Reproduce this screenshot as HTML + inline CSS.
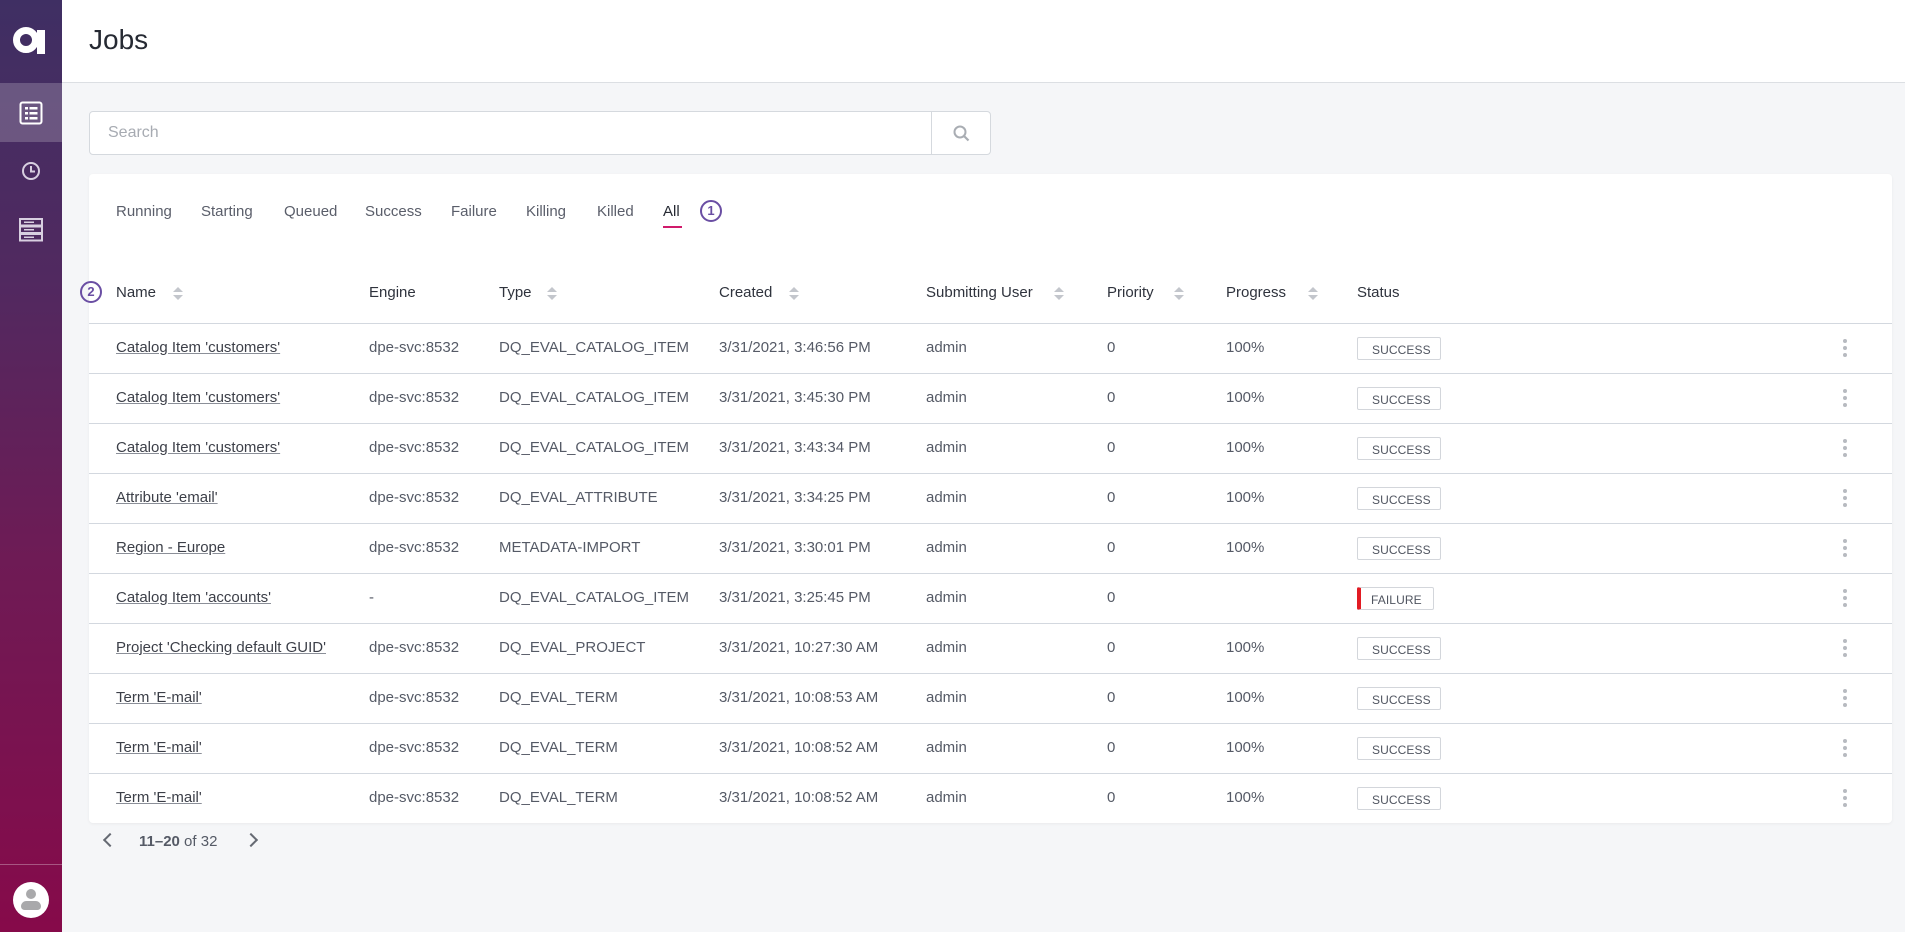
<!DOCTYPE html>
<html><head><meta charset="utf-8"><style>
*{box-sizing:border-box;margin:0;padding:0}
body{width:1905px;height:932px;overflow:hidden;background:#f5f6f8;font-family:"Liberation Sans",sans-serif;color:#555a66;position:relative}
.sb{position:absolute;left:0;top:0;width:62px;height:932px;background:linear-gradient(180deg,#3f2f63 0%,#512960 30%,#6e1b55 60%,#860a4a 100%)}
.hdr{position:absolute;left:62px;top:0;right:0;height:83px;background:#fff;border-bottom:1px solid #dcdfe3}
.hdr h1{position:absolute;left:27px;top:24px;font-weight:400;font-size:28px;color:#262a33}
.search{position:absolute;left:89px;top:111px;width:902px;height:44px;background:#fff;border:1px solid #d5d9de;border-radius:4px}
.search span{position:absolute;left:18px;top:12px;font-size:16px;color:#a7abb2}
.search .btn{position:absolute;left:841px;top:0;width:1px;height:42px;background:#d5d9de}
.card{position:absolute;left:89px;top:174px;width:1803px;height:649px;background:#fff;border-radius:4px;box-shadow:0 1px 3px rgba(0,0,0,.05)}
.t{position:absolute;font-size:15px;white-space:nowrap}
.tab{top:203px;color:#5a5e6a}
.th{top:284px;color:#2f333d;font-size:15px}
.sort{position:absolute;width:10px;height:14px}
.sort:before{content:"";position:absolute;left:0;top:0;border-left:5px solid transparent;border-right:5px solid transparent;border-bottom:5px solid #c3c6cc}
.sort:after{content:"";position:absolute;left:0;top:8px;border-left:5px solid transparent;border-right:5px solid transparent;border-top:5px solid #c3c6cc}
.line{position:absolute;left:89px;width:1803px;height:1px;background:#d3d8df}
.name{color:#3c3f48;text-decoration:underline;text-decoration-color:#8b8f98}
.badge{position:absolute;height:23px;border:1px solid #d3d6db;border-radius:2px;font-size:12px;color:#505560;padding:5px 0 0 14px;letter-spacing:.1px;white-space:nowrap}
.kb{position:absolute;width:4px}
.kb i{display:block;width:4px;height:4px;border-radius:2px;background:#b7bac0;margin-bottom:3px}
.circ{position:absolute;width:22px;height:22px;border:2.5px solid #6a4ea3;border-radius:50%;color:#6a4ea3;font-size:13px;font-weight:bold;text-align:center;line-height:17px}
</style></head><body>
<div class="sb">
 <svg style="position:absolute;left:13px;top:26px" width="34" height="28" viewBox="0 0 34 28"><circle cx="13" cy="14" r="9.5" fill="none" stroke="#fff" stroke-width="7"/><rect x="24" y="4" width="8" height="24" fill="#fff"/></svg>
 <div style="position:absolute;left:0;top:83px;width:62px;height:59px;background:rgba(255,255,255,.2)"></div>
 <svg style="position:absolute;left:19px;top:101px" width="24" height="24" viewBox="0 0 24 24"><rect x="1.5" y="1.5" width="21" height="21" rx="2" fill="none" stroke="#fff" stroke-width="2"/><g fill="#fff"><rect x="6" y="6" width="3" height="2.5"/><rect x="10.5" y="6" width="8" height="2.5"/><rect x="6" y="11" width="3" height="2.5"/><rect x="10.5" y="11" width="8" height="2.5"/><rect x="6" y="16" width="3" height="2.5"/><rect x="10.5" y="16" width="8" height="2.5"/></g></svg>
 <svg style="position:absolute;left:21px;top:161px" width="20" height="20" viewBox="0 0 20 20"><circle cx="10" cy="10" r="8" fill="none" stroke="#d8cfe0" stroke-width="2"/><path d="M10 5v5.5h4" fill="none" stroke="#d8cfe0" stroke-width="2"/></svg>
 <svg style="position:absolute;left:19px;top:218px" width="24" height="24" viewBox="0 0 24 24"><g fill="none" stroke="#d8cfe0" stroke-width="2"><rect x="1" y="1" width="22" height="6.5"/><rect x="1" y="8.5" width="22" height="6.5"/><rect x="1" y="16" width="22" height="6.5"/></g><g fill="#d8cfe0"><rect x="5" y="3.5" width="10" height="1.5"/><rect x="5" y="11" width="10" height="1.5"/><rect x="5" y="18.5" width="10" height="1.5"/></g></svg>
 <div style="position:absolute;left:0;top:864px;width:62px;height:1px;background:rgba(255,255,255,.3)"></div>
 <div style="position:absolute;left:13px;top:882px;width:36px;height:36px;border-radius:50%;background:#fff;overflow:hidden"><div style="position:absolute;left:13px;top:7px;width:10px;height:10px;border-radius:50%;background:#a9a9ab"></div><div style="position:absolute;left:8px;top:19px;width:20px;height:9px;border-radius:6px 6px 4px 4px;background:#a9a9ab"></div></div>
</div>
<div class="hdr"><h1>Jobs</h1></div>
<div class="search"><span>Search</span><div class="btn"></div>
 <svg style="position:absolute;left:862px;top:12px" width="20" height="20" viewBox="0 0 20 20"><circle cx="8" cy="8" r="5.5" fill="none" stroke="#a9adb3" stroke-width="2"/><path d="M12 12l4.5 4.5" stroke="#a9adb3" stroke-width="2.2"/></svg>
</div>
<div class="card"></div>
<div class="t tab" style="left:116px">Running</div>
<div class="t tab" style="left:201px">Starting</div>
<div class="t tab" style="left:284px">Queued</div>
<div class="t tab" style="left:365px">Success</div>
<div class="t tab" style="left:451px">Failure</div>
<div class="t tab" style="left:526px">Killing</div>
<div class="t tab" style="left:597px">Killed</div>
<div class="t tab" style="left:663px;color:#262a33">All</div>
<div style="position:absolute;left:663px;top:226px;width:19px;height:2px;background:#d01a6b"></div>
<div class="circ" style="left:700px;top:200px">1</div>
<div class="circ" style="left:80px;top:281px">2</div>
<div class="t th" style="left:116px">Name</div><div class="sort" style="left:173px;top:287px"></div>
<div class="t th" style="left:369px">Engine</div>
<div class="t th" style="left:499px">Type</div><div class="sort" style="left:547px;top:287px"></div>
<div class="t th" style="left:719px">Created</div><div class="sort" style="left:789px;top:287px"></div>
<div class="t th" style="left:926px">Submitting User</div><div class="sort" style="left:1054px;top:287px"></div>
<div class="t th" style="left:1107px">Priority</div><div class="sort" style="left:1174px;top:287px"></div>
<div class="t th" style="left:1226px">Progress</div><div class="sort" style="left:1308px;top:287px"></div>
<div class="t th" style="left:1357px">Status</div>
<div class="line" style="top:323px"></div>
<div id="rows"></div>
<div style="position:absolute;left:105px;top:835px;width:10px;height:10px;border-left:2.5px solid #666a73;border-bottom:2.5px solid #666a73;transform:rotate(45deg)"></div>
<div class="t" style="left:139px;top:833px;color:#555a66"><b style="font-weight:600">11–20</b> of 32</div>
<div style="position:absolute;left:246px;top:835px;width:10px;height:10px;border-right:2.5px solid #666a73;border-top:2.5px solid #666a73;transform:rotate(45deg)"></div>
<script>
var d=[["Catalog Item 'customers'","dpe-svc:8532","DQ_EVAL_CATALOG_ITEM","3/31/2021, 3:46:56 PM",1],
["Catalog Item 'customers'","dpe-svc:8532","DQ_EVAL_CATALOG_ITEM","3/31/2021, 3:45:30 PM",1],
["Catalog Item 'customers'","dpe-svc:8532","DQ_EVAL_CATALOG_ITEM","3/31/2021, 3:43:34 PM",1],
["Attribute 'email'","dpe-svc:8532","DQ_EVAL_ATTRIBUTE","3/31/2021, 3:34:25 PM",1],
["Region - Europe","dpe-svc:8532","METADATA-IMPORT","3/31/2021, 3:30:01 PM",1],
["Catalog Item 'accounts'","-","DQ_EVAL_CATALOG_ITEM","3/31/2021, 3:25:45 PM",0],
["Project 'Checking default GUID'","dpe-svc:8532","DQ_EVAL_PROJECT","3/31/2021, 10:27:30 AM",1],
["Term 'E-mail'","dpe-svc:8532","DQ_EVAL_TERM","3/31/2021, 10:08:53 AM",1],
["Term 'E-mail'","dpe-svc:8532","DQ_EVAL_TERM","3/31/2021, 10:08:52 AM",1],
["Term 'E-mail'","dpe-svc:8532","DQ_EVAL_TERM","3/31/2021, 10:08:52 AM",1]];
var h="";
d.forEach(function(r,i){var y=323+i*50,ty=y+16;
h+='<div class="t name" style="left:116px;top:'+ty+'px">'+r[0]+'</div>';
h+='<div class="t" style="left:369px;top:'+ty+'px">'+r[1]+'</div>';
h+='<div class="t" style="left:499px;top:'+ty+'px">'+r[2]+'</div>';
h+='<div class="t" style="left:719px;top:'+ty+'px">'+r[3]+'</div>';
h+='<div class="t" style="left:926px;top:'+ty+'px">admin</div>';
h+='<div class="t" style="left:1107px;top:'+ty+'px">0</div>';
if(r[4])h+='<div class="t" style="left:1226px;top:'+ty+'px">100%</div>';
h+=r[4]?'<div class="badge" style="left:1357px;top:'+(y+14)+'px;width:84px">SUCCESS</div>':'<div class="badge" style="left:1357px;top:'+(y+14)+'px;width:77px;border-left:4px solid #e21b23;padding-left:10px">FAILURE</div>';
h+='<div class="kb" style="left:1843px;top:'+(y+16)+'px"><i></i><i></i><i></i></div>';
if(i<9)h+='<div class="line" style="top:'+(y+50)+'px"></div>';});
document.getElementById("rows").innerHTML=h;
</script>
</body></html>
